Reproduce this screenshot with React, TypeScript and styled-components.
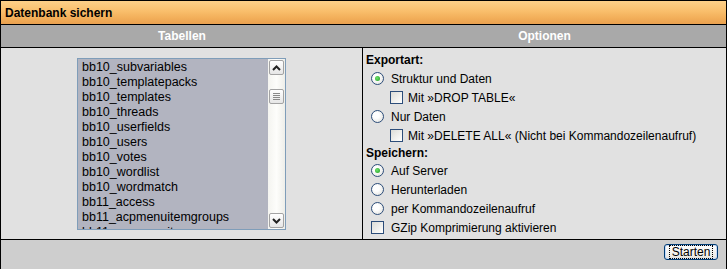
import React from 'react';
import styled, { createGlobalStyle } from 'styled-components';

const GlobalStyle = createGlobalStyle`
  html, body {
    margin: 0;
    padding: 0;
    background: #cecece;
  }
  body {
    font-family: "Liberation Sans", Arial, sans-serif;
    font-size: 12px;
    color: #000;
  }
`;

const Panel = styled.div`
  width: 727px;
  height: 269px;
  box-sizing: border-box;
  border: 1px solid #000;
  border-bottom: none;
  display: flex;
  flex-direction: column;
  background: #cecece;
`;

const TitleBar = styled.div`
  height: 23px;
  border-bottom: 1px solid #000;
  background: linear-gradient(#fdd089 0%, #f9be6b 45%, #f2ae59 75%, #eaa14f 100%);
  display: flex;
  align-items: center;
  padding-left: 4px;
  font-weight: 700;
  font-size: 12px;
`;

const HeadRow = styled.div`
  height: 22px;
  border-bottom: 1px solid #000;
  background: #a9a9a9;
  display: grid;
  grid-template-columns: 362px 1fr;
`;

const HeadCell = styled.div`
  display: flex;
  align-items: center;
  justify-content: center;
  color: #fff;
  font-weight: 700;
  font-size: 12px;
`;

const Content = styled.div`
  height: 191px;
  border-bottom: 1px solid #000;
  background: #e1e1e1;
  display: grid;
  grid-template-columns: 361px 1fr;
`;

const TablesCell = styled.div`
  display: flex;
  align-items: center;
  justify-content: center;
  padding-top: 1px;
`;

const OptionsCell = styled.div`
  border-left: 1px solid #000;
  padding: 3px 0 0 3px;
  display: flex;
  flex-direction: column;
`;

const ListBox = styled.div`
  width: 209px;
  height: 172px;
  box-sizing: border-box;
  border: 1px solid #7f9db9;
  background: #b2b4c0;
  display: flex;
  overflow: hidden;
`;

const Items = styled.div`
  flex: 1;
  padding: 1px 0 0 4px;
  overflow: hidden;
`;

const Item = styled.div`
  height: 15px;
  line-height: 15px;
  font-size: 12.5px;
  white-space: nowrap;
`;

const ScrollBar = styled.div`
  width: 17px;
  display: flex;
  flex-direction: column;
  align-items: center;
  background: linear-gradient(90deg, #f4f4f0, #fdfdfb 50%, #eeeee9);
  padding: 1px 0;
  box-sizing: border-box;
`;

const ScrollButton = styled.div`
  width: 15px;
  height: 15px;
  box-sizing: border-box;
  border: 1px solid #a3a3a3;
  border-radius: 2px;
  background: linear-gradient(#ffffff, #e6e6e6);
  display: flex;
  align-items: center;
  justify-content: center;
`;

const Track = styled.div`
  flex: 1;
  display: flex;
  flex-direction: column;
  align-items: center;
`;

const Thumb = styled(ScrollButton)<{ $offset: number }>`
  margin-top: ${({ $offset }) => $offset}px;
  flex-direction: column;
  gap: 1px;
`;

const Grip = styled.span`
  display: block;
  width: 7px;
  height: 1px;
  background: #8a8a8a;
`;

const Heading = styled.div<{ $height: number }>`
  height: ${({ $height }) => $height}px;
  display: flex;
  align-items: center;
  font-weight: 700;
`;

const OptionRow = styled.label<{ $indent: number }>`
  height: 19px;
  display: flex;
  align-items: center;
  padding-left: ${({ $indent }) => $indent}px;
  white-space: nowrap;
`;

const Radio = styled.span<{ $checked?: boolean }>`
  width: 13px;
  height: 13px;
  box-sizing: border-box;
  border-radius: 50%;
  border: 1px solid #2c4d7a;
  background: radial-gradient(circle at 40% 40%, #ffffff 30%, #dcdcd7 100%);
  margin-right: 7px;
  display: flex;
  align-items: center;
  justify-content: center;
  &::after {
    content: '';
    display: ${({ $checked }) => ($checked ? 'block' : 'none')};
    width: 5px;
    height: 5px;
    border-radius: 50%;
    background: radial-gradient(circle at 40% 40%, #6ee36e, #1e9a1e);
  }
`;

const Check = styled.span<{ $gap: number }>`
  width: 13px;
  height: 13px;
  box-sizing: border-box;
  border: 1px solid #2c4d7a;
  background: linear-gradient(135deg, #dcdcd7, #ffffff);
  margin-right: ${({ $gap }) => $gap}px;
`;

const Footer = styled.div`
  flex: 1;
  display: flex;
  justify-content: flex-end;
  align-items: flex-start;
  padding: 4px 8px 0 0;
`;

const Button = styled.button`
  height: 16px;
  width: 54px;
  padding: 0;
  box-sizing: border-box;
  border: 1px solid #003c74;
  border-radius: 3px;
  background: linear-gradient(#ffffff, #ecebe6 85%, #d6d0c5);
  box-shadow: inset 0 0 0 1px #c6dbfa;
  font-family: "Liberation Sans", Arial, sans-serif;
  font-size: 12px;
  color: #000;
  display: flex;
  align-items: center;
  justify-content: center;
  span {
    outline: 1px dotted #000;
    padding: 0 2px;
    line-height: 12px;
  }
`;

const tables = [
  'bb10_subvariables',
  'bb10_templatepacks',
  'bb10_templates',
  'bb10_threads',
  'bb10_userfields',
  'bb10_users',
  'bb10_votes',
  'bb10_wordlist',
  'bb10_wordmatch',
  'bb11_access',
  'bb11_acpmenuitemgroups',
  'bb11_acpmenuitems',
];

const Arrow = ({ up }: { up?: boolean }) => (
  <svg width="9" height="6" viewBox="0 0 9 6">
    <polyline
      points={up ? '1,5 4.5,1.5 8,5' : '1,1 4.5,4.5 8,1'}
      fill="none"
      stroke="#222"
      strokeWidth="2"
    />
  </svg>
);

export default function App() {
  return (
    <>
      <GlobalStyle />
      <Panel>
        <TitleBar>Datenbank sichern</TitleBar>
        <HeadRow>
          <HeadCell>Tabellen</HeadCell>
          <HeadCell>Optionen</HeadCell>
        </HeadRow>
        <Content>
          <TablesCell>
            <ListBox>
              <Items>
                {tables.map((t) => (
                  <Item key={t}>{t}</Item>
                ))}
              </Items>
              <ScrollBar>
                <ScrollButton>
                  <Arrow up />
                </ScrollButton>
                <Track>
                  <Thumb $offset={14}>
                    <Grip />
                    <Grip />
                    <Grip />
                    <Grip />
                  </Thumb>
                </Track>
                <ScrollButton>
                  <Arrow />
                </ScrollButton>
              </ScrollBar>
            </ListBox>
          </TablesCell>
          <OptionsCell>
            <Heading $height={18}>Exportart:</Heading>
            <OptionRow $indent={5}>
              <Radio $checked />
              Struktur und Daten
            </OptionRow>
            <OptionRow $indent={24}>
              <Check $gap={5} />
              Mit »DROP TABLE«
            </OptionRow>
            <OptionRow $indent={5}>
              <Radio />
              Nur Daten
            </OptionRow>
            <OptionRow $indent={24}>
              <Check $gap={5} />
              Mit »DELETE ALL« (Nicht bei Kommandozeilenaufruf)
            </OptionRow>
            <Heading $height={16}>Speichern:</Heading>
            <OptionRow $indent={5}>
              <Radio $checked />
              Auf Server
            </OptionRow>
            <OptionRow $indent={5}>
              <Radio />
              Herunterladen
            </OptionRow>
            <OptionRow $indent={5}>
              <Radio />
              per Kommandozeilenaufruf
            </OptionRow>
            <OptionRow $indent={5}>
              <Check $gap={7} />
              GZip Komprimierung aktivieren
            </OptionRow>
          </OptionsCell>
        </Content>
        <Footer>
          <Button>
            <span>Starten</span>
          </Button>
        </Footer>
      </Panel>
    </>
  );
}
